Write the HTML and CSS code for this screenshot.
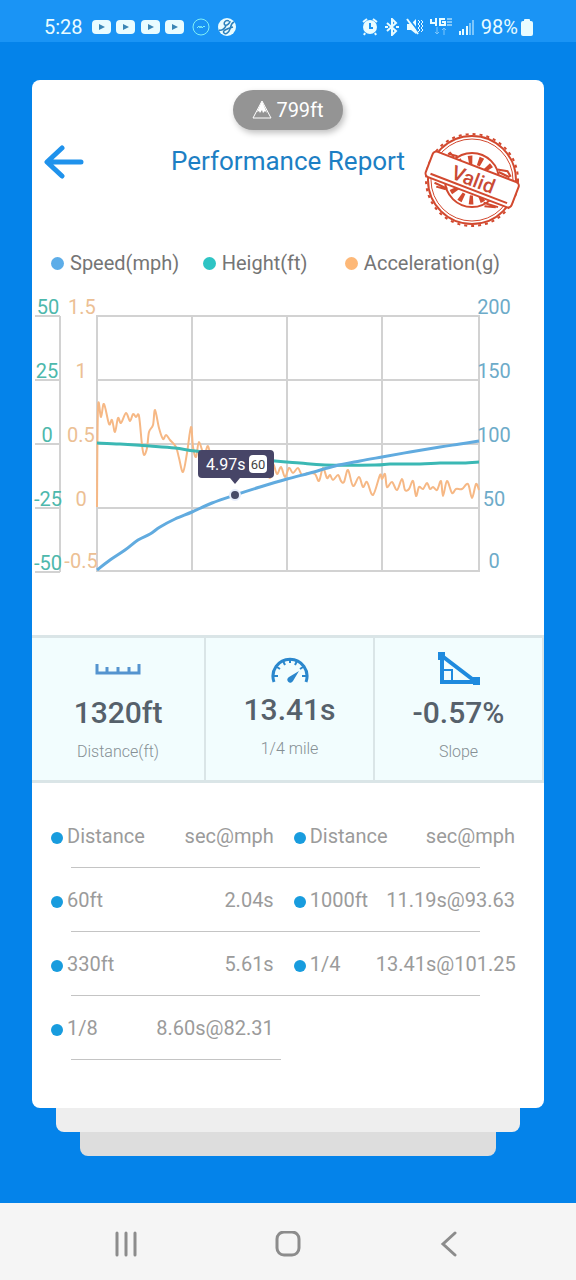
FILE: index.html
```html
<!DOCTYPE html>
<html lang="en">
<head>
    <meta charset="UTF-8">
    <meta name="viewport" content="width=device-width, initial-scale=1.0">
    <title>Performance Report</title>
    <link rel="stylesheet" href="styles.css">
</head>
<body>

<!-- Status bar -->
<div class="status-bar">
    <div class="status-group">
        <span class="status-text">5:28</span>
        <svg class="video-icons" width="93" height="14" viewBox="0 0 93 14">
            <g id="video"><rect width="19" height="14" rx="4" fill="#e9fcff"/><path d="M7 4l6 3-6 3z" fill="#3b86b5"/></g>
            <use href="#video" x="24"/>
            <use href="#video" x="49"/>
            <use href="#video" x="73"/>
        </svg>
        <svg width="18" height="18" viewBox="0 0 18 18" fill="none" stroke="#7ff0f5">
            <circle cx="9" cy="9" r="8"/>
            <path d="M5 10l2-2 1 2 1-2 1 2 2-2 1 1"/>
        </svg>
        <svg width="20" height="20" viewBox="0 0 20 20" fill="none">
            <circle cx="10" cy="10" r="9" fill="#e9fcff"/>
            <path d="M12 4C8 2 6 7 8 8s5-2 5-4M17 5c-3 1-3 4-4 7s-4 6-6 4 2-4 9-6M2 13c3 1 5-1 7-4" stroke="#2b80bd" stroke-width="1.5"/>
        </svg>
    </div>
    <div class="status-group status-right">
        <svg width="16" height="18" viewBox="0 0 16 18" fill="#e9fcff">
            <path d="M1 4l4-3M15 4l-4-3M3 15l-1 2M13 15l1 2" stroke="#e9fcff" stroke-width="2"/>
            <circle cx="8" cy="9" r="7"/>
            <path d="M8 5v5h3" fill="none" stroke="#1a94f5" stroke-width="2"/>
        </svg>
        <svg width="14" height="18" viewBox="0 0 14 18" fill="none" stroke="#e9fcff" stroke-width="2">
            <path d="M2 5l9 8-4 4V1l4 4-9 8M0 9h3M11 9h3"/>
        </svg>
        <svg width="17" height="18" viewBox="0 0 17 18" fill="#e9fcff">
            <path d="M1 6h4l5-5v15l-5-4H1z"/>
            <path d="M3 1l10 13" stroke="#1a94f5" stroke-width="2"/>
            <path d="M1 1l11 15" stroke="#e9fcff" stroke-width="2"/>
            <path d="M12 2l2 2-2 2 2 2-2 2 2 2-2 2M15 2l2 2-2 2 2 2-2 2 2 2-2 2" fill="none" stroke="#e9fcff"/>
        </svg>
        <svg width="22" height="20" viewBox="0 0 22 20" fill="none" stroke="#e9fcff">
            <path d="M1 2v4h6M6 1v8M15 2H10v6h5V5h-3" stroke-width="2"/>
            <path d="M17 2h5M17 5h5M17 8h5"/>
            <path d="M7 10v7l-2-2M7 17l2-2M14 18v-7l-2 2M14 11l2 2" stroke="#7cc6fb"/>
        </svg>
        <svg width="15" height="16" viewBox="0 0 15 16">
            <path d="M1 12v4M4 10v6M8 7v9" stroke="#e9fcff" stroke-width="2"/>
            <path d="M11 4v12M14 1v15" stroke="#7cc6fb" stroke-width="2"/>
        </svg>
        <span class="status-text">98%</span>
        <svg class="battery" width="12" height="17" viewBox="0 0 12 17" fill="#e9fcff">
            <rect y="2" width="12" height="15" rx="2"/>
            <rect x="3" width="6" height="4" rx="1"/>
        </svg>
    </div>
</div>

<main class="page">
    <div class="card">
        <div class="altitude">
            <svg width="20" height="20" viewBox="0 0 20 20">
                <path d="M10 1L1 18h18z" fill="none" stroke="#fff"/>
                <path d="M10 1L5 12l2-1 1 2 2-3 1 3 2-2 2 2z" fill="#fff"/>
            </svg>
            799ft
        </div>

        <header class="report-header">
            <button type="button" class="back-btn" aria-label="Back">
                <svg width="40" height="34" viewBox="0 0 40 34" fill="none" stroke="#1f92ec" stroke-width="5" stroke-linecap="round" stroke-linejoin="round">
                    <path d="M37 17H4M18 3L3 17l15 14"/>
                </svg>
            </button>
            <h1>Performance Report</h1>
            <svg class="stamp" width="98" height="96" viewBox="0 0 98 96" fill="none" stroke="#d2492f">
                <circle cx="49" cy="48" r="46" stroke-width="2" stroke-dasharray="3 4"/>
                <circle cx="49" cy="48" r="44" stroke-width="2"/>
                <circle cx="49" cy="48" r="41"/>
                <circle cx="49" cy="48" r="27" stroke-width="2"/>
                <circle cx="49" cy="48" r="20" stroke-width="9" stroke-dasharray="4 6"/>
                <g transform="rotate(21 49 48)">
                    <path d="M17 32l10-1M18 30l6 3M71 31l12 1M69 29l10-2 5 4M15 64l14 1M18 67l10-1M68 65l15-1M70 68l11-3" stroke-width="2"/>
                    <rect x="3" y="34" width="92" height="27" rx="4" fill="#fff" stroke-width="2"/>
                    <path d="M8 57h82" stroke-width="2"/>
                    <text x="50" y="54" class="stamp-text">Valid</text>
                </g>
            </svg>
        </header>

        <ul class="legend">
            <li><span class="dot speed"></span>Speed(mph)</li>
            <li><span class="dot height"></span>Height(ft)</li>
            <li><span class="dot accel"></span>Acceleration(g)</li>
        </ul>

        <!-- Chart -->
        <svg class="chart" viewBox="32 290 512 300">
            <g class="grid-lines">
                <path d="M60 316V572M35 316H60M35 380H60M35 444H60M35 508H60M35 572H60"/>
                <path d="M97 316H479V571H97zM97 380H479M97 444H479M97 508H479M192 316V571M287 316V571M382 316V571"/>
            </g>
            <g class="axis axis-height">
                <text x="48" y="314">50</text>
                <text x="47" y="378">25</text>
                <text x="47" y="442">0</text>
                <text x="48" y="506">-25</text>
                <text x="48" y="570">-50</text>
            </g>
            <g class="axis axis-accel">
                <text x="82" y="314">1.5</text>
                <text x="81" y="378">1</text>
                <text x="81" y="442">0.5</text>
                <text x="81" y="506">0</text>
                <text x="81" y="568">-0.5</text>
            </g>
            <g class="axis axis-speed">
                <text x="494" y="314">200</text>
                <text x="494" y="378">150</text>
                <text x="494" y="442">100</text>
                <text x="494" y="506">50</text>
                <text x="494" y="568">0</text>
            </g>
            <path id="accelLine" class="line line-accel"/>
            <path id="heightLine" class="line line-height"/>
            <path id="speedLine" class="line line-speed"/>
            <circle cx="235" cy="495" r="5" fill="#474a68" stroke="#e6ecfb" stroke-width="2"/>
            <path d="M202 450H270a4 4 0 0 1 4 4V474a4 4 0 0 1-4 4H240L235 484L230 478H202a4 4 0 0 1-4-4V454a4 4 0 0 1 4-4z" fill="#474567"/>
            <text x="206" y="470" class="tip-time">4.97s</text>
            <rect x="249" y="455" width="18" height="18" rx="4" fill="#fff"/>
            <text x="258" y="469" class="tip-badge">60</text>
        </svg>

        <section class="stats">
            <div class="stat">
                <svg width="46" height="32" viewBox="0 0 46 32" fill="none" stroke="#5594cf">
                    <path d="M2 12v9h42v-9" stroke-width="3"/>
                    <path d="M12 15v5M23 15v5M34 15v5" stroke-width="3"/>
                </svg>
                <strong>1320ft</strong>
                <span>Distance(ft)</span>
            </div>
            <div class="stat">
                <svg width="38" height="31" viewBox="0 0 38 31" fill="none" stroke="#2b87cd">
                    <path d="M3 30A17 17 0 1 1 35 30" stroke-width="3"/>
                    <path d="M3 24h4M6 15l3 2M12 9l2 4M19 7v4M26 9l-2 4M32 15l-3 2M35 24h-4" stroke-width="2"/>
                    <path d="M28 19l-6 10a3 3 0 1 1-4-4z" fill="#2b87cd" stroke="none"/>
                </svg>
                <strong>13.41s</strong>
                <span>1/4 mile</span>
            </div>
            <div class="stat">
                <svg width="42" height="34" viewBox="0 0 42 34" fill="none" stroke="#1f8ade">
                    <path d="M4 4v26h34z" stroke-width="4"/>
                    <path d="M5 18h9v11" stroke-width="2"/>
                    <path d="M0 0h7v8H0zM35 25h7v8h-7z" fill="#1f8ade" stroke="none"/>
                </svg>
                <strong>-0.57%</strong>
                <span>Slope</span>
            </div>
        </section>

        <!-- Split times -->
        <table class="splits">
            <thead>
                <tr><th>Distance</th><th>sec@mph</th><th>Distance</th><th>sec@mph</th></tr>
            </thead>
            <tbody>
                <tr><td>60ft</td><td>2.04s</td><td>1000ft</td><td>11.19s@93.63</td></tr>
                <tr><td>330ft</td><td>5.61s</td><td>1/4</td><td>13.41s@101.25</td></tr>
                <tr class="half"><td>1/8</td><td>8.60s@82.31</td><td></td><td></td></tr>
            </tbody>
        </table>
    </div>
    <div class="sheet"></div>
    <div class="sheet sheet-last"></div>
</main>

<nav class="nav-bar">
    <button type="button" aria-label="Recent apps">
        <svg width="26" height="26" viewBox="0 0 26 26" stroke="#8c8c8c" stroke-width="3" stroke-linecap="round"><path d="M3 2v22M12 2v22M21 2v22"/></svg>
    </button>
    <button type="button" aria-label="Home">
        <svg width="26" height="26" viewBox="0 0 26 26" fill="none" stroke="#8c8c8c" stroke-width="3"><rect x="2" y="1" width="22" height="23" rx="7"/></svg>
    </button>
    <button type="button" aria-label="Back">
        <svg width="26" height="26" viewBox="0 0 26 26" fill="none" stroke="#8c8c8c" stroke-width="3" stroke-linecap="round"><path d="M19 2L7 13l12 11"/></svg>
    </button>
</nav>

<script>
    const accel = [
        [97,507],[98,407],[101,417],[104,404],[109,424],[112,420],[115,432],[118,418],[121,423],[126,413],
        [130,421],[133,414],[136,417],[139,416],[142,445],[144,455],[147,448],[149,432],[153,425],[155,410],
        [159,428],[163,439],[166,435],[170,440],[176,447],[179,458],[183,472],[187,453],[191,427],[193,447],
        [196,457],[199,442],[204,455],[208,446],[212,460],[220,456],[230,464],[240,460],[250,470],[260,466],
        [270,478],[273,464],[277,474],[281,467],[285,477],[289,468],[293,473],[298,468],[302,475],[308,473],
        [315,474],[319,481],[323,468],[327,478],[330,475],[333,480],[338,475],[341,481],[344,482],[348,470],
        [353,486],[359,477],[363,487],[367,482],[373,495],[380,475],[382,479],[385,474],[387,487],[392,482],
        [397,490],[402,479],[405,490],[409,489],[413,481],[416,496],[419,487],[423,489],[427,483],[430,489],
        [433,487],[437,490],[441,481],[443,496],[447,481],[452,493],[456,489],[462,489],[468,484],[472,498],
        [476,484],[479,490]
    ];
    const height = [
        [97,443],[120,444],[150,446],[175,448],[195,451],[230,455],[275,461],[300,463],[325,465],
        [375,465],[390,464],[420,464],[440,463],[463,463],[479,462]
    ];
    const speed = [
        [97,570],[110,560],[125,550],[138,540],[150,534],[160,527],[175,519],[192,512],[212,503],[235,495],
        [260,487],[287,479],[310,473],[335,466],[360,461],[382,457],[410,452],[440,447],[460,444],[479,441]
    ];

    // Draw a smooth line through all the points
    function drawLine(id, points) {
        let d = 'M' + points[0];
        for (let i = 0; i < points.length - 1; i++) {
            const before = points[i - 1] || points[i];
            const from = points[i];
            const to = points[i + 1];
            const after = points[i + 2] || to;
            d += ` C${from[0] + (to[0] - before[0]) / 6} ${from[1] + (to[1] - before[1]) / 6}`;
            d += ` ${to[0] - (after[0] - from[0]) / 6} ${to[1] - (after[1] - from[1]) / 6} ${to[0]} ${to[1]}`;
        }
        document.getElementById(id).setAttribute('d', d);
    }

    drawLine('accelLine', accel);
    drawLine('heightLine', height);
    drawLine('speedLine', speed);
</script>

</body>
</html>
```

FILE: styles.css
```css
* {
    box-sizing: border-box;
}

body {
    display: flex;
    flex-direction: column;
    min-height: 100vh;
    margin: 0;
    font-family: Roboto, 'Liberation Sans', sans-serif;
    font-size: 20px;
    background-color: #0483ea;
}

svg {
    display: block;
    flex: none;
}

button {
    padding: 0;
    border: none;
    background: none;
    cursor: pointer;
}

/* Status bar */
.status-bar {
    display: flex;
    justify-content: space-between;
    padding: 12px 43px 0 44px;
    height: 42px;
    background-color: #1a94f5;
    color: #e9fcff;
}

.status-group {
    display: flex;
    align-items: center;
    gap: 7px;
    height: 30px;
}

.video-icons {
    margin-left: 2px;
}

.status-text {
    font-size: 20px;
    line-height: 30px;
}

.battery {
    margin-left: -4px;
}

/* Report card */
.page {
    flex: 1;
    padding: 38px 32px 47px;
}

.card {
    padding: 10px 0 48px;
    border-radius: 8px;
    background-color: #fff;
}

.altitude {
    display: flex;
    align-items: center;
    justify-content: center;
    gap: 4px;
    width: 110px;
    height: 40px;
    margin: 0 auto;
    border-radius: 20px;
    background-color: #949494;
    color: #fff;
    box-shadow: 2px 3px 6px rgba(0, 0, 0, 0.25);
}

.report-header {
    display: grid;
    grid-template-columns: 1fr auto 1fr;
    height: 106px;
    padding: 0 12px;
}

.back-btn {
    align-self: start;
    justify-self: start;
    height: 64px;
}

h1 {
    margin: 0;
    font-size: 26px;
    font-weight: 400;
    line-height: 62px;
    color: #1d7fc4;
}

.stamp {
    justify-self: end;
    margin: 2px 11px 0 0;
}

.stamp-text {
    font-size: 20px;
    font-weight: 500;
    text-anchor: middle;
    fill: #c94a35;
    stroke: none;
}

.legend {
    display: grid;
    grid-template-columns: 32% 30% auto;
    margin: 0;
    padding: 0 19px;
    list-style: none;
    line-height: 54px;
    color: #757575;
}

.legend li {
    display: flex;
    align-items: center;
    gap: 6px;
}

.dot {
    width: 13px;
    height: 13px;
    border-radius: 50%;
}

.speed {
    background-color: #5dade8;
}

.height {
    background-color: #2ec4c4;
}

.accel {
    background-color: #fdb878;
}

/* Chart */
.chart {
    width: 100%;
}

.grid-lines path {
    fill: none;
    stroke: #d2d2d2;
    stroke-width: 2px;
}

.axis text {
    font-size: 20px;
    text-anchor: middle;
}

.axis-height {
    fill: #4db8ac;
}

.axis-accel {
    fill: #ecc094;
}

.axis-speed {
    fill: #6dabc9;
}

.line {
    fill: none;
    stroke-linejoin: round;
}

.line-accel {
    stroke: #f6b885;
    stroke-width: 2px;
}

.line-height {
    stroke: #3bb8b4;
    stroke-width: 3px;
}

.line-speed {
    stroke: #61abdf;
    stroke-width: 3px;
}

.tip-time {
    font-size: 16px;
    fill: #fff;
}

.tip-badge {
    font-size: 13px;
    text-anchor: middle;
    fill: #444;
}

/* Stats */
.stats {
    display: grid;
    grid-template-columns: 34% 33% 33%;
    margin-top: 45px;
    border-top: 3px solid #dae5e7;
    border-bottom: 3px solid #dae5e7;
    background-color: #f2fdfe;
}

.stat {
    display: flex;
    flex-direction: column;
    align-items: center;
    height: 142px;
    padding-top: 14px;
    border-right: 2px solid #dae5e7;
}

.stat svg {
    margin-bottom: auto;
}

.stat strong {
    font-size: 30px;
    font-weight: 500;
    line-height: 40px;
    color: #56616b;
}

.stat span {
    margin: 7px 0 16px;
    font-size: 16px;
    font-weight: 300;
    line-height: 24px;
    color: #858f94;
}

.stat:nth-child(2) span {
    margin-bottom: 19px;
}

/* Split times */
.splits {
    width: calc(100% - 48px);
    margin: 21px 29px 0 19px;
    table-layout: fixed;
    border-collapse: collapse;
    color: #9b9b9b;
}

.splits tr {
    background: linear-gradient(#c4c4c4, #c4c4c4) no-repeat 20px 100% / calc(100% - 55px) 1px;
}

.splits .half {
    background-size: 210px 1px;
}

.splits th,
.splits td {
    width: 30%;
    height: 64px;
    padding: 0;
    font-weight: 400;
    text-align: right;
    white-space: nowrap;
}

.splits th:nth-child(odd),
.splits td:nth-child(odd) {
    text-align: left;
}

.splits th:nth-child(1) {
    width: 18%;
}

.splits th:nth-child(3) {
    width: 22%;
}

.splits th:nth-child(3),
.splits td:nth-child(3) {
    padding-left: 20px;
}

.splits th:nth-child(odd)::before,
.splits td:nth-child(odd):not(:empty)::before {
    content: '';
    display: inline-block;
    width: 12px;
    height: 12px;
    margin-right: 4px;
    border-radius: 50%;
    background-color: #189cde;
    vertical-align: -1px;
}

/* Sheets under the card */
.sheet {
    height: 24px;
    margin: 0 24px;
    border-radius: 0 0 8px 8px;
    background-color: #eee;
}

.sheet-last {
    margin: 0 48px;
    background-color: #ddd;
}

/* Navigation bar */
.nav-bar {
    display: flex;
    align-items: center;
    justify-content: center;
    height: 77px;
    padding: 4px 0 0;
    background-color: #f5f5f5;
}

.nav-bar button {
    display: flex;
    justify-content: center;
    width: 28%;
}
```
